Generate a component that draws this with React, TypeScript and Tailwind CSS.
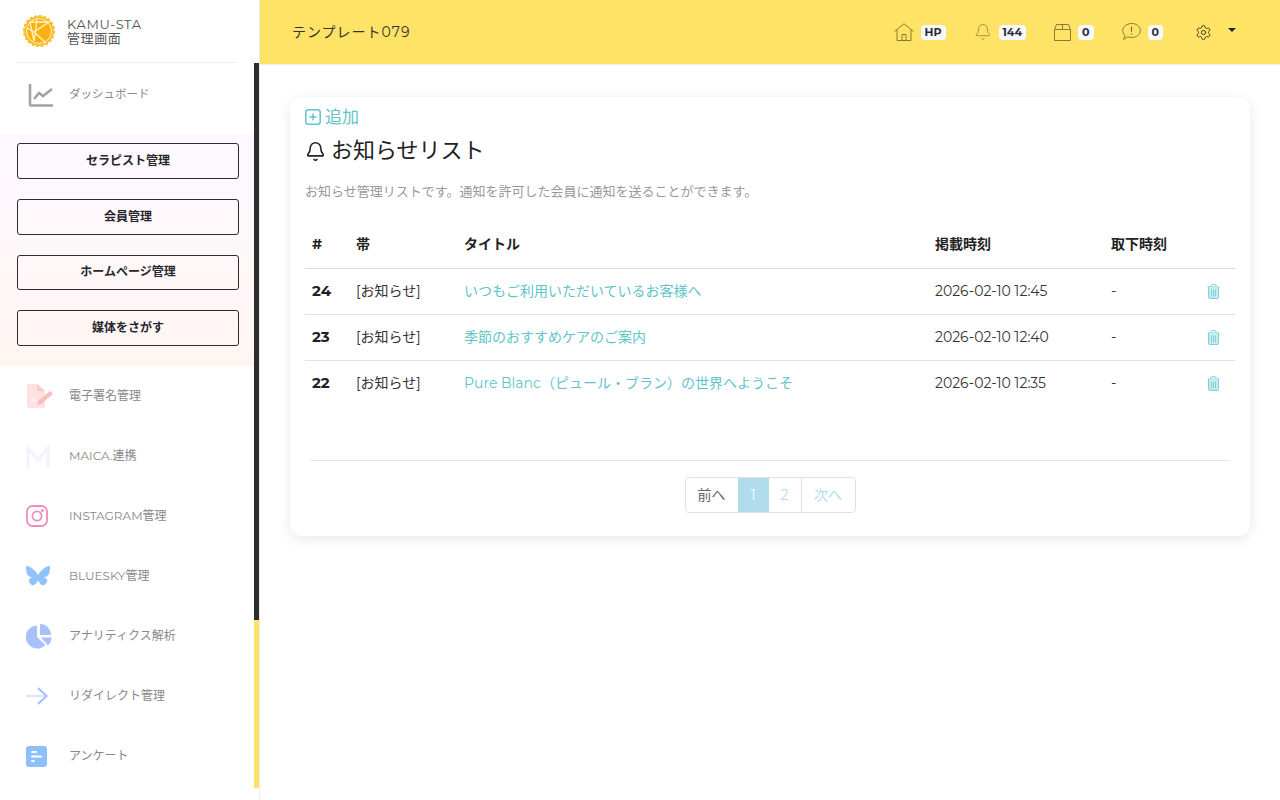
import { Bell, Settings } from 'lucide-react'

function LogoMark() {
  return (
    <svg width="34" height="34" viewBox="0 0 34 34">
      <circle cx="17" cy="17" r="14.5" fill="#f9b115" stroke="#fbc02d" strokeWidth="3" strokeDasharray="3 1.5" />
      <circle cx="17" cy="17" r="12.5" fill="none" stroke="#fff3c4" strokeWidth="1" />
      <path d="M8 8 L12 27 M15 5 L12 27 M27 8 L12 18 L24 29 M8 8 L27 8 M12 18 L5 14" fill="none" stroke="#fff3c4" strokeWidth="1.3" />
    </svg>
  )
}

function ChartIcon() {
  return (
    <svg width="26" height="24" viewBox="0 0 26 24" fill="none" stroke="#a3a3a3" strokeWidth="2.6">
      <path d="M2 1 V21.5 Q2 22.5 3 22.5 H25" />
      <path d="M6 16 L11 10 L15 13 L24 6" />
    </svg>
  )
}

function SignIcon() {
  return (
    <svg width="28" height="24" viewBox="0 0 28 24">
      <path d="M1 2 Q1 0 3 0 H11 L19 7 V22 Q19 24 17 24 H3 Q1 24 1 22 Z" fill="#ffe1e1" />
      <path d="M11 0 L19 7 H11 Z" fill="#ffc9c9" />
      <path d="M12 17 L24 7 L27 10 L15 20 L11 21 Z" fill="#fbbcbc" />
      <path d="M5 18 L8 15 L9 18 L12 17" fill="none" stroke="#fff" strokeWidth="1" />
    </svg>
  )
}

function InstagramIcon() {
  return (
    <svg width="22" height="22" viewBox="0 0 22 22" fill="none" stroke="#f08cbd" strokeWidth="1.8">
      <rect x="1" y="1" width="20" height="20" rx="5.5" />
      <circle cx="11" cy="11" r="4.6" />
      <circle cx="16.4" cy="5.4" r="0.6" fill="#f08cbd" />
    </svg>
  )
}

function ButterflyIcon() {
  return (
    <svg width="24" height="21" viewBox="0 0 24 21" fill="#8fc2ff">
      <path d="M12 9 C10 5 4 0 1 0 C-0.5 0 0 3 0.5 6 C1 10 4 11.5 7 11 C3 12 1.5 14.5 4 17.5 C7 21 10 19 12 14 C14 19 17 21 20 17.5 C22.5 14.5 21 12 17 11 C20 11.5 23 10 23.5 6 C24 3 24.500 0 23 0 C20 0 14 5 12 9 Z" />
    </svg>
  )
}

function PieIcon() {
  return (
    <svg width="26" height="25" viewBox="0 0 26 25" fill="#a6c1fb">
      <path d="M11 1.500 A11.500 11.500 0 1 0 19.500 21 L11 13 Z" />
      <path d="M14 0 A11 11 0 0 1 25 11 H14 Z" />
      <path d="M15 13.500 H25.500 A11 11 0 0 1 22 21.500 Z" />
    </svg>
  )
}

function ArrowIcon() {
  return (
    <svg width="22" height="18" viewBox="0 0 22 18" fill="none" strokeWidth="2.2">
      <path d="M0 9 H20" stroke="#dbe6fd" />
      <path d="M12 1 L20.500 9 L12 17" stroke="#a6c1fb" />
    </svg>
  )
}

function FormIcon() {
  return (
    <svg width="21" height="21" viewBox="0 0 21 21">
      <rect width="21" height="21" rx="3" fill="#8cc0fd" />
      <rect x="5" y="5" width="6" height="2" rx="1" fill="#fff" />
      <rect x="5" y="9.500" width="11" height="2" rx="1" fill="#fff" />
      <rect x="5" y="14" width="4" height="2" rx="1" fill="#fff" />
    </svg>
  )
}

function MaicaIcon() {
  return (
    <svg width="24" height="22" viewBox="0 0 24 22" fill="none" stroke="#f3f3fe" strokeWidth="3.4">
      <path d="M2 22 V3 L12 15 L22 3 V22" />
    </svg>
  )
}

function HouseIcon() {
  return (
    <svg width="20" height="18" viewBox="0 0 20 18" fill="none" stroke="#7d6f2c" strokeWidth="0.9">
      <path d="M0.500 8.500 L10 0.700 L19.500 8.500" />
      <path d="M3 6.800 V17.500 H17 V6.800" />
      <path d="M8 17.500 V11.500 H12 V17.500" />
    </svg>
  )
}

function BoxIcon() {
  return (
    <svg width="17" height="17" viewBox="0 0 17 17" fill="none" stroke="#7d6f2c" strokeWidth="0.9">
      <path d="M0.500 5.500 H16.500 V16.500 H0.500 Z" />
      <path d="M0.500 5.500 L2.500 0.500 H14.500 L16.500 5.500 M8.500 0.500 V5.500" />
    </svg>
  )
}

function AlertBubbleIcon() {
  return (
    <svg width="19" height="18" viewBox="0 0 19 18" fill="none" stroke="#7d6f2c" strokeWidth="0.9">
      <path d="M9.800 0.500 C14.500 0.500 18.300 3.500 18.300 7.500 C18.300 11.500 14.500 14.500 9.800 14.500 C8.300 14.500 7 14.200 5.800 13.700 L1.500 16.500 L3 12.300 C1.500 11 0.700 9.300 0.700 7.500 C0.700 3.500 5 0.500 9.800 0.500 Z" />
      <path d="M9.500 3.500 V8.800 M9.500 10.500 V11.800" strokeWidth="1.100" />
    </svg>
  )
}

function TrashIcon() {
  return (
    <svg width="13" height="15" viewBox="0 0 13 15" fill="none" stroke="#7fd0d8" strokeWidth="1">
      <path d="M0.500 3 H12.500 M4 3 V1.500 Q4 0.700 4.800 0.700 H8.200 Q9 0.700 9 1.500 V3" />
      <path d="M1.500 3 V13 Q1.500 14.500 3 14.500 H10 Q11.500 14.500 11.500 13 V3" fill="#c8edf0" />
      <path d="M4.500 5.500 V12.500 M6.500 5.500 V12.500 M8.500 5.500 V12.500" />
    </svg>
  )
}

function PlusSquareIcon() {
  return (
    <svg width="16" height="16" viewBox="0 0 16 16" fill="none" stroke="#5fc5cb" strokeWidth="1.500">
      <rect x="0.800" y="0.800" width="14.400" height="14.400" rx="2.500" />
      <path d="M8 4.500 V11.500 M4.500 8 H11.500" />
    </svg>
  )
}

const menuItems = [
  { label: '電子署名管理', icon: <SignIcon /> },
  { label: 'MAICA.連携', icon: <MaicaIcon /> },
  { label: 'INSTAGRAM管理', icon: <InstagramIcon /> },
  { label: 'BLUESKY管理', icon: <ButterflyIcon /> },
  { label: 'アナリティクス解析', icon: <PieIcon /> },
  { label: 'リダイレクト管理', icon: <ArrowIcon /> },
  { label: 'アンケート', icon: <FormIcon /> },
]

const rows = [
  { id: 24, title: 'いつもご利用いただいているお客様へ', date: '2026-02-10 12:45' },
  { id: 23, title: '季節のおすすめケアのご案内', date: '2026-02-10 12:40' },
  { id: 22, title: 'Pure Blanc（ピュール・ブラン）の世界へようこそ', date: '2026-02-10 12:35' },
]

function Sidebar() {
  return (
    <aside className="flex h-[800px] w-[260px] shrink-0 overflow-hidden border-r border-[#ececec] bg-white">
      <div className="w-[254px] shrink-0">
        <div className="mx-4 flex h-[63px] items-center gap-[11px] border-b border-[#f0f0f0] pl-[6px] pb-[1px]">
          <LogoMark />
          <div className="text-[13px] leading-[14px] tracking-[0.6px] text-[#555]">
            <div>KAMU-STA</div>
            <div>管理画面</div>
          </div>
        </div>
        <div className="flex h-[71px] items-center pb-[8px] pl-[28px]">
          <div className="w-[41px]"><ChartIcon /></div>
          <span className="text-[11.5px] text-[#8a8a8a]">ダッシュボード</span>
        </div>
        <div className="flex h-[232px] flex-col bg-gradient-to-b from-[#fdf8ff] to-[#fff6f2] pl-[17px] pr-[15px] pt-[9px]">
          {['セラピスト管理', '会員管理', 'ホームページ管理', '媒体をさがす'].map((label) => (
            <button key={label} className="mb-[20px] flex h-[38px] w-[222px] items-center justify-center rounded-[3px] border border-[#2b2b33] text-[12px] font-bold text-[#26262c]">
              {label}
            </button>
          ))}
        </div>
        {menuItems.map((item) => (
          <div key={item.label} className="flex h-[60px] items-center pl-[26px]">
            <div className="flex w-[43px] justify-start">{item.icon}</div>
            <span className="text-[12px] text-[#888]">{item.label}</span>
          </div>
        ))}
      </div>
      <div className="w-[5px] shrink-0 pt-[63px]">
        <div className="h-[557px] bg-[#2d2d2f]" />
        <div className="h-[168px] bg-[#ffe366]" />
      </div>
    </aside>
  )
}

function HeaderBadge({ icon, text }: { icon: React.ReactNode; text: string }) {
  return (
    <div className="flex items-center gap-[7px]">
      {icon}
      <span className="rounded-[4px] bg-[#f8f9fc] px-[4px] text-[11px] leading-[15px] font-bold text-[#2a2a35]">{text}</span>
    </div>
  )
}

function TopBar() {
  return (
    <header className="flex h-[65px] items-center justify-between border-b border-[#eee] bg-[#ffe366] pl-[32px] pr-[44px]">
      <span className="text-[14px] tracking-[1px] text-[#333]">テンプレート079</span>
      <div className="flex items-center">
        <HeaderBadge icon={<HouseIcon />} text="HP" />
        <div className="ml-[28px]">
          <HeaderBadge icon={<Bell size={18} strokeWidth={0.9} color="#7d6f2c" />} text="144" />
        </div>
        <div className="ml-[28px]">
          <HeaderBadge icon={<BoxIcon />} text="0" />
        </div>
        <div className="ml-[28px]">
          <HeaderBadge icon={<AlertBubbleIcon />} text="0" />
        </div>
        <div className="ml-[32px] flex items-center gap-[16px]">
          <Settings size={17} strokeWidth={1.3} color="#33312a" />
          <span className="mb-[4px] h-0 w-0 border-x-[4px] border-t-[4px] border-x-transparent border-t-[#222]" />
        </div>
      </div>
    </header>
  )
}

function NoticeTable() {
  return (
    <table className="w-[930px] table-fixed border-collapse">
      <colgroup>
        <col className="w-[44px]" />
        <col className="w-[108px]" />
        <col className="w-[471px]" />
        <col className="w-[176px]" />
        <col className="w-[96px]" />
        <col />
      </colgroup>
      <thead>
        <tr className="h-[46px] border-b border-[#dedede] text-left text-[14px] font-bold text-[#222]">
          <th className="pl-[7px]">#</th>
          <th className="pl-[7px]">帯</th>
          <th className="pl-[7px]">タイトル</th>
          <th className="pl-[7px]">掲載時刻</th>
          <th className="pl-[7px]">取下時刻</th>
          <th />
        </tr>
      </thead>
      <tbody>
        {rows.map((row) => (
          <tr key={row.id} className="h-[46px] border-b border-[#e2e2e2] text-[14px] text-[#333] last:border-b-0">
            <td className="pl-[7px] text-[15px] font-bold text-[#222]">{row.id}</td>
            <td className="pl-[7px]">[お知らせ]</td>
            <td className="pl-[7px] text-[#5fc5cb]">{row.title}</td>
            <td className="pl-[7px]">{row.date}</td>
            <td className="pl-[7px]">-</td>
            <td className="pl-[7px]"><TrashIcon /></td>
          </tr>
        ))}
      </tbody>
    </table>
  )
}

function Pagination() {
  return (
    <div className="flex h-[36px] overflow-hidden rounded-[4px] border border-[#e0e0e0] text-[14px]">
      <span className="flex w-[52px] items-center justify-center text-[#666]">前へ</span>
      <span className="flex w-[31px] items-center justify-center bg-[#b1dcec] text-white">1</span>
      <span className="flex w-[33px] items-center justify-center border-r border-[#e0e0e0] text-[#b1dcec]">2</span>
      <span className="flex w-[53px] items-center justify-center text-[#b1dcec]">次へ</span>
    </div>
  )
}

export default function App() {
  return (
    <div className="flex h-[800px] overflow-hidden bg-white font-['Montserrat','Inter','Noto_Sans_CJK_JP',sans-serif]">
      <Sidebar />
      <main className="min-w-0 flex-1">
        <TopBar />
        <div className="px-[30px] pt-[32px]">
          <section className="h-[439px] rounded-[12px] bg-white px-[15px] pt-[8px] shadow-[0_3px_14px_rgba(0,0,0,0.09)]">
            <div className="flex items-center gap-[4px] text-[17px] leading-[24px] text-[#5fc5cb]">
              <PlusSquareIcon />
              <span>追加</span>
            </div>
            <h1 className="mt-[6px] flex items-center gap-[5px] text-[22px] leading-[32px] text-[#222]">
              <Bell size={21} strokeWidth={1.8} color="#222" />
              お知らせリスト
            </h1>
            <p className="mt-[14px] text-[13px] leading-[20px] text-[#999]">お知らせ管理リストです。通知を許可した会員に通知を送ることができます。</p>
            <div className="mt-[21px]">
              <NoticeTable />
            </div>
            <div className="mx-[5px] mt-[54px] border-t border-[#e2e2e2]" />
            <div className="mt-[16px] flex justify-center">
              <Pagination />
            </div>
          </section>
        </div>
      </main>
    </div>
  )
}
